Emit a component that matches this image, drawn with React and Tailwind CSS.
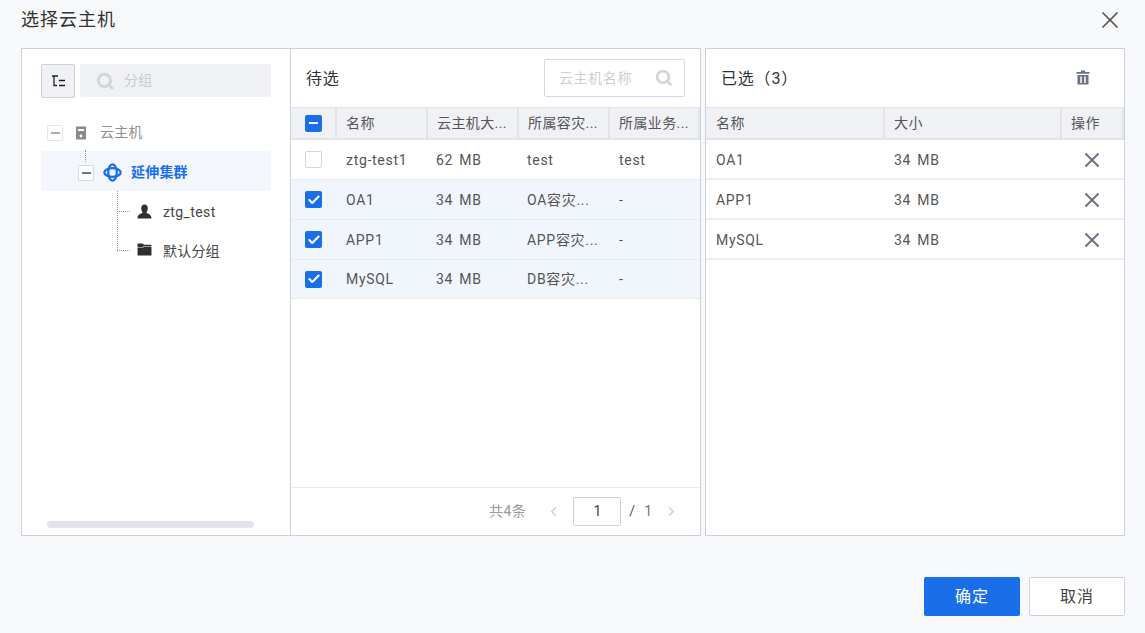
import React from 'react';
import { X, ChevronLeft, ChevronRight, Check } from 'lucide-react';

const FONT = "font-['Roboto','Noto_Sans_CJK_SC',sans-serif]";

const rows = [
  { name: 'ztg-test1', size: '62 MB', zone: 'test', biz: 'test', checked: false },
  { name: 'OA1', size: '34 MB', zone: 'OA容灾...', biz: '-', checked: true },
  { name: 'APP1', size: '34 MB', zone: 'APP容灾...', biz: '-', checked: true },
  { name: 'MySQL', size: '34 MB', zone: 'DB容灾...', biz: '-', checked: true, short: true },
];

const selected = [
  { name: 'OA1', size: '34 MB' },
  { name: 'APP1', size: '34 MB' },
  { name: 'MySQL', size: '34 MB' },
];

const SearchIcon = ({ className }) => (
  <svg viewBox="0 0 16 16" className={className} fill="none">
    <circle cx="7.5" cy="7.5" r="5.5" stroke="currentColor" strokeWidth="2.6" />
    <path d="M11.5 11.5L14.5 14.5" stroke="currentColor" strokeWidth="2.6" strokeLinecap="round" />
  </svg>
);

const Collapse = ({ dim }) => (
  <span className={`flex items-center justify-center w-[16px] h-[16px] border bg-white rounded-[1px] ${dim ? 'border-[#e4e6ea]' : 'border-[#d5d8de]'}`}>
    <span className={`w-[9px] h-[2px] ${dim ? 'bg-[#a9adb5]' : 'bg-[#70757e]'}`} />
  </span>
);

const Checkbox = ({ state }) => {
  if (state === 'none') {
    return <span className="block w-[17px] h-[17px] rounded-[2px] border border-[#d3d6dc] bg-white" />;
  }
  return (
    <span className="flex items-center justify-center w-[17px] h-[17px] rounded-[2px] bg-[#1a6fe8]">
      {state === 'some' ? (
        <span className="w-[9px] h-[2px] bg-white" />
      ) : (
        <Check size={14} strokeWidth={3.5} className="text-white" />
      )}
    </span>
  );
};

const Th = ({ children, className = '' }) => (
  <div className={`flex items-center pl-[9px] pt-[1px] border-r-2 border-[#e2e4ea] h-full overflow-hidden whitespace-nowrap ${className}`}>
    {children}
  </div>
);

const TreePanel = () => (
  <div className="w-[269px] shrink-0 border-r border-[#ccd1dc] flex flex-col px-[19px] pt-[15px] relative">
    <div className="flex gap-[5px]">
      <button className="flex items-center justify-center w-[34px] h-[34px] rounded-[2px] border border-[#ccd0d8] bg-[#f0f1f5]">
        <svg viewBox="0 0 15 12" className="w-[15px] h-[12px]" fill="none" stroke="#222" strokeWidth="1.3">
          <path d="M1 1H7M3 1V10.500H6M8 5.500H14M8 10.500H14" />
        </svg>
      </button>
      <div className="flex-1 h-[33px] rounded-[2px] bg-[#f0f1f5] flex items-center pl-[16px] gap-[10px]">
        <SearchIcon className="w-[18px] h-[18px] text-[#d3d5d8]" />
        <span className="text-[14px] tracking-[0.3px] text-[#c9cbcf]">分组</span>
      </div>
    </div>

    <div className="mt-[15px] flex flex-col relative">
      <div className="h-[38px] flex items-center pt-[1px] pl-[6px]">
        <Collapse dim />
        <svg viewBox="0 0 12 14" className="w-[12px] h-[14px] ml-[12px]">
          <path d="M1 0.500H11V13.500H1Z" fill="#8a8a8a" />
          <path d="M3 3H9V5H3Z" fill="#fff" />
          <circle cx="6" cy="10" r="1.400" fill="#fff" />
        </svg>
        <span className="ml-[13px] text-[14px] tracking-[0.3px] text-[#8f8f8f]">云主机</span>
      </div>

      <div className="h-[40px] flex items-center pt-[3px] bg-[#f3f6fb] pl-[37px] relative">
        <span className="absolute left-[44px] -top-[1px] h-[12px] border-l border-dotted border-[#9a9a9a]" />
        <Collapse />
        <svg viewBox="0 0 20 20" className="w-[19px] h-[19px] ml-[9px]" fill="none" stroke="#1a6fe8" strokeWidth="2.400">
          <ellipse cx="10" cy="10" rx="4.500" ry="8.600" />
          <ellipse cx="10" cy="10" rx="8.600" ry="4.500" />
        </svg>
        <span className="ml-[9px] text-[14px] tracking-[0.2px] font-bold text-[#1a6fe8]">延伸集群</span>
      </div>

      <div className="h-[40px] flex items-center pt-[2px] pl-[96px] relative">
        <span className="absolute left-[76px] top-0 h-[59px] border-l border-dotted border-[#9a9a9a]" />
        <span className="absolute left-[76px] top-[20px] w-[13px] border-t border-dotted border-[#9a9a9a]" />
        <svg viewBox="0 0 16 16" className="w-[15px] h-[15px] -mt-[2px]" fill="#2f2f2f">
          <path d="M8 0.500C10.500 0.500 11.500 2.500 11.500 4.500C11.500 6.500 10.800 7.800 10.200 8.500V9.500C12 10.200 15.500 11 15.500 15.500H0.500C0.500 11 4 10.200 5.800 9.500V8.500C5.200 7.800 4.500 6.500 4.500 4.500C4.500 2.500 5.500 0.500 8 0.500Z" />
        </svg>
        <span className="ml-[11px] text-[14px] tracking-[0.4px] text-[#444]">ztg_test</span>
      </div>

      <div className="h-[40px] flex items-center pl-[96px] relative">
        <span className="absolute left-[76px] top-[19px] w-[13px] border-t border-dotted border-[#9a9a9a]" />
        <svg viewBox="0 0 16 14" className="w-[15px] h-[13px] -mt-[3px]" fill="#2f2f2f">
          <path d="M0.500 0.500H6L7.500 2H15.500V3.200H7.500L6 4.200H0.500ZM0.500 4.800H6.500L8 3.800H15.500V13.500H0.500Z" />
        </svg>
        <span className="ml-[11px] text-[14px] tracking-[0.2px] text-[#444] pt-[1px]">默认分组</span>
      </div>
    </div>

    <div className="mt-auto mb-[7px] ml-[6px] w-[207px] h-[7px] rounded-full bg-[#e1e4e9]" />
  </div>
);

const CandidatePanel = () => (
  <div className="w-[409px] shrink-0 flex flex-col">
    <div className="h-[58px] shrink-0 flex items-center justify-between pl-[15px] pr-[15px]">
      <span className="text-[16px] tracking-[0.8px] text-[#333] pt-[1px]">待选</span>
      <div className="w-[141px] h-[38px] -mt-[1px] rounded-[2px] border border-[#d5d8e0] flex items-center justify-between pl-[14px] pr-[12px]">
        <span className="text-[14px] tracking-[0.6px] text-[#cfcfcf] pt-[1px]">云主机名称</span>
        <SearchIcon className="w-[17px] h-[17px] text-[#d3d5d8]" />
      </div>
    </div>

    <div className="h-[33px] shrink-0 grid grid-cols-[46px_91px_91px_91px_1fr] bg-[#f0f1f5] border-t border-b-2 border-[#e2e4ea] text-[14px] tracking-[0.4px] text-[#555]">
      <div className="flex items-center pl-[14px] border-r-2 border-[#e2e4ea]"><Checkbox state="some" /></div>
      <Th>名称</Th>
      <Th>云主机大...</Th>
      <Th>所属容灾...</Th>
      <Th className="border-r-0">所属业务...</Th>
    </div>

    {rows.map((r) => (
      <div
        key={r.name}
        className={`shrink-0 grid grid-cols-[46px_91px_91px_91px_1fr] items-center border-b border-[#e8ebf0] text-[14px] tracking-[0.7px] text-[#555] ${r.short ? 'h-[39px]' : 'h-[40px]'} ${r.checked ? 'bg-[#f1f6fd]' : 'bg-white'}`}
      >
        <div className="pl-[14px]"><Checkbox state={r.checked ? 'all' : 'none'} /></div>
        <div className="pl-[9px] pt-[1px]">{r.name}</div>
        <div className="pl-[8px] pt-[1px] [word-spacing:2px]">{r.size}</div>
        <div className="pl-[8px] pt-[1px] whitespace-nowrap">{r.zone}</div>
        <div className="pl-[9px] pt-[1px]">{r.biz}</div>
      </div>
    ))}

    <div className="mt-auto h-[48px] shrink-0 border-t border-[#e8ebf0] flex items-center justify-end pr-[21px] text-[14px]">
      <span className="text-[14px] tracking-[0.5px] text-[#999]">共4条</span>
      <ChevronLeft size={15} className="ml-[20px] text-[#ccc]" />
      <span className="ml-[12px] w-[48px] h-[29px] rounded-[2px] border border-[#ccd1dc] bg-white flex items-center justify-center text-[#444]">1</span>
      <span className="ml-[8px] text-[#555]">/</span>
      <span className="ml-[9px] text-[#777]">1</span>
      <ChevronRight size={15} className="ml-[12px] text-[#ccc]" />
    </div>
  </div>
);

const SelectedPanel = () => (
  <div className="w-[420px] shrink-0 border border-[#ccd1dc] bg-white flex flex-col">
    <div className="h-[58px] shrink-0 flex items-center justify-between pl-[15px] pr-[34px]">
      <span className="text-[16px] tracking-[0.8px] text-[#333] pt-[1px]">已选（3）</span>
      <svg viewBox="0 0 14 15" className="w-[14px] h-[15px] -mt-[2px]" fill="#6c7280">
        <path d="M5 0.500H9V2H13.500V3.800H0.500V2H5Z" />
        <path d="M1.500 5H12.500V14.500H1.500ZM4.300 6.500V13H5.800V6.500ZM8.200 6.500V13H9.700V6.500Z" fillRule="evenodd" />
      </svg>
    </div>

    <div className="h-[33px] shrink-0 grid grid-cols-[179px_177px_1fr] bg-[#f0f1f5] border-t border-b-2 border-[#e2e4ea] text-[14px] tracking-[0.4px] text-[#555]">
      <Th className="pl-[10px]">名称</Th>
      <Th>大小</Th>
      <Th className="border-r-0">操作</Th>
    </div>

    {selected.map((r) => (
      <div key={r.name} className="h-[40px] shrink-0 grid grid-cols-[179px_177px_1fr] items-center border-b-2 border-[#eceef2] text-[14px] tracking-[0.7px] text-[#555]">
        <div className="pl-[10px] pt-[2px]">{r.name}</div>
        <div className="pl-[9px] pt-[2px] [word-spacing:2px]">{r.size}</div>
        <div className="pl-[18px] pt-[1px]"><X size={24} strokeWidth={2} className="text-[#6c7280]" /></div>
      </div>
    ))}
  </div>
);

export default function App() {
  return (
    <div className={`w-[1145px] h-[633px] bg-[#f7f8fa] flex flex-col overflow-hidden ${FONT}`}>
      <div className="h-[48px] shrink-0 flex items-center justify-between pl-[21px] pr-[21px]">
        <span className="text-[18px] tracking-[1px] text-[#333] -mt-[10px]">选择云主机</span>
        <X size={28} strokeWidth={1.500} className="text-[#555] -mt-[8px]" />
      </div>

      <div className="h-[488px] shrink-0 flex pl-[21px] gap-[4px]">
        <div className="w-[680px] shrink-0 border border-[#ccd1dc] bg-white flex">
          <TreePanel />
          <CandidatePanel />
        </div>
        <SelectedPanel />
      </div>

      <div className="flex justify-end gap-[9px] pr-[20px] pt-[41px]">
        <button className="w-[96px] h-[39px] rounded-[2px] bg-[#1a6fe8] text-[16px] tracking-[1px] text-white pt-[1px]">确定</button>
        <button className="w-[96px] h-[39px] rounded-[2px] border border-[#ccd1dc] bg-white text-[16px] tracking-[1px] text-[#444] pt-[1px]">取消</button>
      </div>
    </div>
  );
}
